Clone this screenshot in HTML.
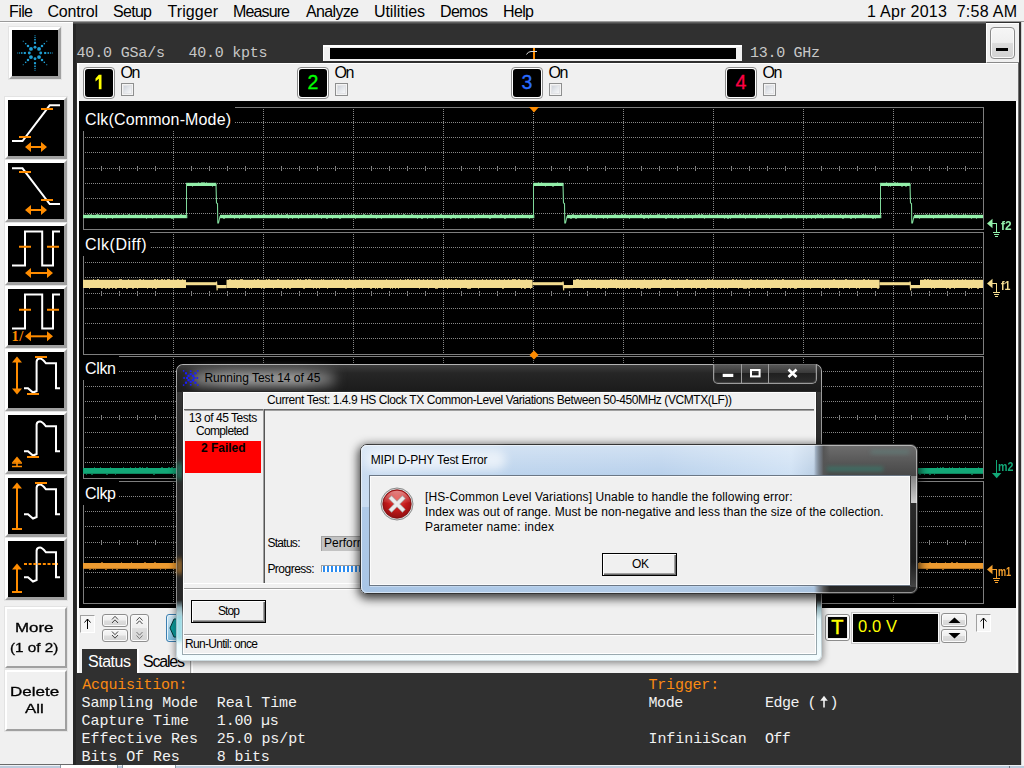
<!DOCTYPE html>
<html><head><meta charset="utf-8"><title>scope</title>
<style>
html,body{margin:0;padding:0;}
body{width:1024px;height:768px;overflow:hidden;position:relative;background:#f0f0f0;font-family:"Liberation Sans",sans-serif;}
.b{position:absolute;box-sizing:border-box;}
.t{position:absolute;white-space:pre;line-height:1;}
svg{position:absolute;overflow:visible;}
</style></head><body>
<div class="b " style="left:0px;top:21px;width:1024px;height:1px;background:#9a9a9a;"></div>
<div class="b " style="left:0px;top:22px;width:73px;height:1px;background:#ffffff;"></div>
<div class="t" id="t1" style="left:9.00px;top:4.00px;font-size:16px;color:#000;font-family:'Liberation Sans', sans-serif;letter-spacing:-0.594px;"><span>File</span></div>
<div class="t" id="t2" style="left:47.50px;top:4.00px;font-size:16px;color:#000;font-family:'Liberation Sans', sans-serif;letter-spacing:-0.180px;"><span>Control</span></div>
<div class="t" id="t3" style="left:113.00px;top:4.00px;font-size:16px;color:#000;font-family:'Liberation Sans', sans-serif;letter-spacing:-0.703px;"><span>Setup</span></div>
<div class="t" id="t4" style="left:167.50px;top:4.00px;font-size:16px;color:#000;font-family:'Liberation Sans', sans-serif;letter-spacing:0.068px;"><span>Trigger</span></div>
<div class="t" id="t5" style="left:233.00px;top:4.00px;font-size:16px;color:#000;font-family:'Liberation Sans', sans-serif;letter-spacing:-0.875px;"><span>Measure</span></div>
<div class="t" id="t6" style="left:306.00px;top:4.00px;font-size:16px;color:#000;font-family:'Liberation Sans', sans-serif;letter-spacing:-0.654px;"><span>Analyze</span></div>
<div class="t" id="t7" style="left:374.00px;top:4.00px;font-size:16px;color:#000;font-family:'Liberation Sans', sans-serif;letter-spacing:-0.070px;"><span>Utilities</span></div>
<div class="t" id="t8" style="left:440.00px;top:4.00px;font-size:16px;color:#000;font-family:'Liberation Sans', sans-serif;letter-spacing:-0.672px;"><span>Demos</span></div>
<div class="t" id="t9" style="left:503.00px;top:4.00px;font-size:16px;color:#000;font-family:'Liberation Sans', sans-serif;letter-spacing:-0.635px;"><span>Help</span></div>
<div class="t" id="t10" style="left:867.00px;top:4.00px;font-size:16px;color:#000;font-family:'Liberation Sans', sans-serif;letter-spacing:0.278px;"><span>1 Apr 2013  7:58 AM</span></div>
<div class="b " style="left:73px;top:22px;width:948px;height:743px;background:#303030;"></div>
<div class="b " style="left:73px;top:22px;width:3px;height:743px;background:#262626;"></div>
<div class="b " style="left:73px;top:22px;width:913px;height:2px;background:linear-gradient(#6e6e6e,#3a3a3a);"></div>
<div class="b " style="left:1021px;top:22px;width:3px;height:743px;background:#f4f4f4;"></div>
<div class="t" id="t11" style="left:76.50px;top:46.00px;font-size:15px;color:#c8c8c8;font-family:'Liberation Mono', monospace;letter-spacing:-0.168px;"><span>40.0 GSa/s</span></div>
<div class="t" id="t12" style="left:188.50px;top:46.00px;font-size:15px;color:#c8c8c8;font-family:'Liberation Mono', monospace;letter-spacing:-0.252px;"><span>40.0 kpts</span></div>
<div class="t" id="t13" style="left:750.00px;top:46.00px;font-size:15px;color:#c8c8c8;font-family:'Liberation Mono', monospace;letter-spacing:-0.288px;"><span>13.0 GHz</span></div>
<div class="b " style="left:323px;top:45px;width:419px;height:16px;background:#f0f0f0;border-top:2px solid #fff;border-left:1px solid #fff;"></div>
<div class="b " style="left:330px;top:48px;width:406px;height:11px;background:#000;"></div>
<div class="b " style="left:533px;top:48px;width:2px;height:11px;background:#ff8c00;"></div>
<svg style="left:526px;top:50px" width="12" height="6"><path d="M0.5,4.5 Q2,1.5 5,1.5 L11,1.5" stroke="#ddd" stroke-width="1" fill="none"/></svg>
<div class="b " style="left:986px;top:23px;width:33px;height:40px;background:#f0f0f0;border-top:1px solid #fff;border-left:1px solid #fff;border-bottom:1px solid #8a8a8a;"></div>
<div class="b " style="left:990px;top:27px;width:25px;height:32px;border:1px solid #8a8a8a;border-radius:4px;background:linear-gradient(#f6f6f6 0%,#efefef 48%,#dcdcdc 52%,#d2d2d2 100%);box-shadow:inset 0 0 0 1px #fafafa;"></div>
<div class="b " style="left:996px;top:48px;width:12px;height:3px;background:#000;"></div>
<div class="b " style="left:77px;top:63px;width:941px;height:38px;background:#f0f0f0;border-top:1px solid #fff;border-left:2px solid #fff;"></div>
<div class="b " style="left:83px;top:67px;width:32px;height:32px;background:#f0f0f0;border:1px solid #8c8c8c;border-radius:4px;box-shadow:inset 0 0 0 1px #fff;"></div>
<div class="b " style="left:85px;top:69px;width:28px;height:28px;background:#000;border-radius:3px;"></div>
<svg style="left:0;top:0" width="200" height="100"><path d="M98.8,74.8 H101.5 V89.2 H98.8 V78.8 L95.5,81.4 V78.6 Z" fill="#ffff00"/></svg>
<div class="t" id="t14" style="left:120.50px;top:65.00px;font-size:16px;color:#000;font-family:'Liberation Sans', sans-serif;letter-spacing:-1.344px;"><span>On</span></div>
<div class="b " style="left:121px;top:83px;width:13px;height:13px;border:1px solid #8e8f8f;background:#f4f4f4;"></div>
<div class="b " style="left:123px;top:85px;width:9px;height:9px;border:1px solid #e2e3e6;background:linear-gradient(135deg,#cfd3da 0%,#e4e7eb 50%,#f6f7f8 100%);"></div>
<div class="b " style="left:297px;top:67px;width:32px;height:32px;background:#f0f0f0;border:1px solid #8c8c8c;border-radius:4px;box-shadow:inset 0 0 0 1px #fff;"></div>
<div class="b " style="left:299px;top:69px;width:28px;height:28px;background:#000;border-radius:3px;"></div>
<div class="t" id="t15" style="left:113.00px;width:400px;text-align:center;top:73.00px;font-size:19.5px;color:#00ff00;font-family:'Liberation Sans', sans-serif;-webkit-text-stroke:0.3px #00ff00;"><span>2</span></div>
<div class="t" id="t16" style="left:334.50px;top:65.00px;font-size:16px;color:#000;font-family:'Liberation Sans', sans-serif;letter-spacing:-1.344px;"><span>On</span></div>
<div class="b " style="left:335px;top:83px;width:13px;height:13px;border:1px solid #8e8f8f;background:#f4f4f4;"></div>
<div class="b " style="left:337px;top:85px;width:9px;height:9px;border:1px solid #e2e3e6;background:linear-gradient(135deg,#cfd3da 0%,#e4e7eb 50%,#f6f7f8 100%);"></div>
<div class="b " style="left:511px;top:67px;width:32px;height:32px;background:#f0f0f0;border:1px solid #8c8c8c;border-radius:4px;box-shadow:inset 0 0 0 1px #fff;"></div>
<div class="b " style="left:513px;top:69px;width:28px;height:28px;background:#000;border-radius:3px;"></div>
<div class="t" id="t17" style="left:327.00px;width:400px;text-align:center;top:73.00px;font-size:19.5px;color:#2a6cff;font-family:'Liberation Sans', sans-serif;-webkit-text-stroke:0.3px #2a6cff;"><span>3</span></div>
<div class="t" id="t18" style="left:548.50px;top:65.00px;font-size:16px;color:#000;font-family:'Liberation Sans', sans-serif;letter-spacing:-1.344px;"><span>On</span></div>
<div class="b " style="left:549px;top:83px;width:13px;height:13px;border:1px solid #8e8f8f;background:#f4f4f4;"></div>
<div class="b " style="left:551px;top:85px;width:9px;height:9px;border:1px solid #e2e3e6;background:linear-gradient(135deg,#cfd3da 0%,#e4e7eb 50%,#f6f7f8 100%);"></div>
<div class="b " style="left:725px;top:67px;width:32px;height:32px;background:#f0f0f0;border:1px solid #8c8c8c;border-radius:4px;box-shadow:inset 0 0 0 1px #fff;"></div>
<div class="b " style="left:727px;top:69px;width:28px;height:28px;background:#000;border-radius:3px;"></div>
<div class="t" id="t19" style="left:541.00px;width:400px;text-align:center;top:73.00px;font-size:19.5px;color:#ff0044;font-family:'Liberation Sans', sans-serif;-webkit-text-stroke:0.3px #ff0044;"><span>4</span></div>
<div class="t" id="t20" style="left:762.50px;top:65.00px;font-size:16px;color:#000;font-family:'Liberation Sans', sans-serif;letter-spacing:-1.344px;"><span>On</span></div>
<div class="b " style="left:763px;top:83px;width:13px;height:13px;border:1px solid #8e8f8f;background:#f4f4f4;"></div>
<div class="b " style="left:765px;top:85px;width:9px;height:9px;border:1px solid #e2e3e6;background:linear-gradient(135deg,#cfd3da 0%,#e4e7eb 50%,#f6f7f8 100%);"></div>
<div class="b " style="left:79px;top:101px;width:937px;height:507px;background:#000;"></div>
<div class="b " style="left:1016px;top:101px;width:2px;height:572px;background:#fbfbfb;"></div>
<div class="b " style="left:1018px;top:63px;width:1px;height:610px;background:#6e6e6e;"></div>
<div class="b " style="left:1021px;top:22px;width:1px;height:743px;background:#d2d2d2;"></div>
<div class="b " style="left:77px;top:101px;width:2px;height:572px;background:#fdfdfd;"></div>
<div class="b " style="left:79px;top:608px;width:937px;height:65px;background:#f0f0f0;"></div>
<svg style="left:0;top:0" width="1024" height="768" shape-rendering="crispEdges">
<line x1="85" y1="122.5" x2="983" y2="122.5" stroke="#888888" stroke-width="1" stroke-dasharray="1 1"/>
<line x1="85" y1="137.5" x2="983" y2="137.5" stroke="#888888" stroke-width="1" stroke-dasharray="1 1"/>
<line x1="85" y1="152.5" x2="983" y2="152.5" stroke="#888888" stroke-width="1" stroke-dasharray="1 1"/>
<line x1="85" y1="168.5" x2="983" y2="168.5" stroke="#888888" stroke-width="1" stroke-dasharray="1 1"/>
<line x1="85" y1="183.5" x2="983" y2="183.5" stroke="#888888" stroke-width="1" stroke-dasharray="1 1"/>
<line x1="85" y1="198.5" x2="983" y2="198.5" stroke="#888888" stroke-width="1" stroke-dasharray="1 1"/>
<line x1="85" y1="213.5" x2="983" y2="213.5" stroke="#888888" stroke-width="1" stroke-dasharray="1 1"/>
<line x1="173.5" y1="109" x2="173.5" y2="229" stroke="#888888" stroke-width="1" stroke-dasharray="1 1"/>
<line x1="263.5" y1="109" x2="263.5" y2="229" stroke="#888888" stroke-width="1" stroke-dasharray="1 1"/>
<line x1="353.5" y1="109" x2="353.5" y2="229" stroke="#888888" stroke-width="1" stroke-dasharray="1 1"/>
<line x1="443.5" y1="109" x2="443.5" y2="229" stroke="#888888" stroke-width="1" stroke-dasharray="1 1"/>
<line x1="533.5" y1="109" x2="533.5" y2="229" stroke="#888888" stroke-width="1" stroke-dasharray="1 1"/>
<line x1="623.5" y1="109" x2="623.5" y2="229" stroke="#888888" stroke-width="1" stroke-dasharray="1 1"/>
<line x1="713.5" y1="109" x2="713.5" y2="229" stroke="#888888" stroke-width="1" stroke-dasharray="1 1"/>
<line x1="803.5" y1="109" x2="803.5" y2="229" stroke="#888888" stroke-width="1" stroke-dasharray="1 1"/>
<line x1="893.5" y1="109" x2="893.5" y2="229" stroke="#888888" stroke-width="1" stroke-dasharray="1 1"/>
<path d="M101.5,166 v5 M119.5,166 v5 M137.5,166 v5 M155.5,166 v5 M191.5,166 v5 M209.5,166 v5 M227.5,166 v5 M245.5,166 v5 M281.5,166 v5 M299.5,166 v5 M317.5,166 v5 M335.5,166 v5 M371.5,166 v5 M389.5,166 v5 M407.5,166 v5 M425.5,166 v5 M461.5,166 v5 M479.5,166 v5 M497.5,166 v5 M515.5,166 v5 M551.5,166 v5 M569.5,166 v5 M587.5,166 v5 M605.5,166 v5 M641.5,166 v5 M659.5,166 v5 M677.5,166 v5 M695.5,166 v5 M731.5,166 v5 M749.5,166 v5 M767.5,166 v5 M785.5,166 v5 M821.5,166 v5 M839.5,166 v5 M857.5,166 v5 M875.5,166 v5 M911.5,166 v5 M929.5,166 v5 M947.5,166 v5 M965.5,166 v5" stroke="#828282" stroke-width="1" fill="none"/>
<rect x="83" y="107" width="152" height="24" fill="#000"/>
<path d="M235,107.5 H983.5 V229.5 H83.5 V131" stroke="#7e7e7e" stroke-width="1" fill="none"/>
<line x1="85" y1="247.5" x2="983" y2="247.5" stroke="#888888" stroke-width="1" stroke-dasharray="1 1"/>
<line x1="85" y1="262.5" x2="983" y2="262.5" stroke="#888888" stroke-width="1" stroke-dasharray="1 1"/>
<line x1="85" y1="277.5" x2="983" y2="277.5" stroke="#888888" stroke-width="1" stroke-dasharray="1 1"/>
<line x1="85" y1="293.5" x2="983" y2="293.5" stroke="#888888" stroke-width="1" stroke-dasharray="1 1"/>
<line x1="85" y1="308.5" x2="983" y2="308.5" stroke="#888888" stroke-width="1" stroke-dasharray="1 1"/>
<line x1="85" y1="323.5" x2="983" y2="323.5" stroke="#888888" stroke-width="1" stroke-dasharray="1 1"/>
<line x1="85" y1="338.5" x2="983" y2="338.5" stroke="#888888" stroke-width="1" stroke-dasharray="1 1"/>
<line x1="173.5" y1="234" x2="173.5" y2="354" stroke="#888888" stroke-width="1" stroke-dasharray="1 1"/>
<line x1="263.5" y1="234" x2="263.5" y2="354" stroke="#888888" stroke-width="1" stroke-dasharray="1 1"/>
<line x1="353.5" y1="234" x2="353.5" y2="354" stroke="#888888" stroke-width="1" stroke-dasharray="1 1"/>
<line x1="443.5" y1="234" x2="443.5" y2="354" stroke="#888888" stroke-width="1" stroke-dasharray="1 1"/>
<line x1="533.5" y1="234" x2="533.5" y2="354" stroke="#888888" stroke-width="1" stroke-dasharray="1 1"/>
<line x1="623.5" y1="234" x2="623.5" y2="354" stroke="#888888" stroke-width="1" stroke-dasharray="1 1"/>
<line x1="713.5" y1="234" x2="713.5" y2="354" stroke="#888888" stroke-width="1" stroke-dasharray="1 1"/>
<line x1="803.5" y1="234" x2="803.5" y2="354" stroke="#888888" stroke-width="1" stroke-dasharray="1 1"/>
<line x1="893.5" y1="234" x2="893.5" y2="354" stroke="#888888" stroke-width="1" stroke-dasharray="1 1"/>
<path d="M101.5,291 v5 M119.5,291 v5 M137.5,291 v5 M155.5,291 v5 M191.5,291 v5 M209.5,291 v5 M227.5,291 v5 M245.5,291 v5 M281.5,291 v5 M299.5,291 v5 M317.5,291 v5 M335.5,291 v5 M371.5,291 v5 M389.5,291 v5 M407.5,291 v5 M425.5,291 v5 M461.5,291 v5 M479.5,291 v5 M497.5,291 v5 M515.5,291 v5 M551.5,291 v5 M569.5,291 v5 M587.5,291 v5 M605.5,291 v5 M641.5,291 v5 M659.5,291 v5 M677.5,291 v5 M695.5,291 v5 M731.5,291 v5 M749.5,291 v5 M767.5,291 v5 M785.5,291 v5 M821.5,291 v5 M839.5,291 v5 M857.5,291 v5 M875.5,291 v5 M911.5,291 v5 M929.5,291 v5 M947.5,291 v5 M965.5,291 v5" stroke="#828282" stroke-width="1" fill="none"/>
<rect x="83" y="232" width="67" height="24" fill="#000"/>
<path d="M150,232.5 H983.5 V354.5 H83.5 V256" stroke="#7e7e7e" stroke-width="1" fill="none"/>
<line x1="85" y1="371.5" x2="983" y2="371.5" stroke="#888888" stroke-width="1" stroke-dasharray="1 1"/>
<line x1="85" y1="386.5" x2="983" y2="386.5" stroke="#888888" stroke-width="1" stroke-dasharray="1 1"/>
<line x1="85" y1="401.5" x2="983" y2="401.5" stroke="#888888" stroke-width="1" stroke-dasharray="1 1"/>
<line x1="85" y1="417.5" x2="983" y2="417.5" stroke="#888888" stroke-width="1" stroke-dasharray="1 1"/>
<line x1="85" y1="432.5" x2="983" y2="432.5" stroke="#888888" stroke-width="1" stroke-dasharray="1 1"/>
<line x1="85" y1="447.5" x2="983" y2="447.5" stroke="#888888" stroke-width="1" stroke-dasharray="1 1"/>
<line x1="85" y1="462.5" x2="983" y2="462.5" stroke="#888888" stroke-width="1" stroke-dasharray="1 1"/>
<line x1="173.5" y1="358" x2="173.5" y2="478" stroke="#888888" stroke-width="1" stroke-dasharray="1 1"/>
<line x1="263.5" y1="358" x2="263.5" y2="478" stroke="#888888" stroke-width="1" stroke-dasharray="1 1"/>
<line x1="353.5" y1="358" x2="353.5" y2="478" stroke="#888888" stroke-width="1" stroke-dasharray="1 1"/>
<line x1="443.5" y1="358" x2="443.5" y2="478" stroke="#888888" stroke-width="1" stroke-dasharray="1 1"/>
<line x1="533.5" y1="358" x2="533.5" y2="478" stroke="#888888" stroke-width="1" stroke-dasharray="1 1"/>
<line x1="623.5" y1="358" x2="623.5" y2="478" stroke="#888888" stroke-width="1" stroke-dasharray="1 1"/>
<line x1="713.5" y1="358" x2="713.5" y2="478" stroke="#888888" stroke-width="1" stroke-dasharray="1 1"/>
<line x1="803.5" y1="358" x2="803.5" y2="478" stroke="#888888" stroke-width="1" stroke-dasharray="1 1"/>
<line x1="893.5" y1="358" x2="893.5" y2="478" stroke="#888888" stroke-width="1" stroke-dasharray="1 1"/>
<path d="M101.5,415 v5 M119.5,415 v5 M137.5,415 v5 M155.5,415 v5 M191.5,415 v5 M209.5,415 v5 M227.5,415 v5 M245.5,415 v5 M281.5,415 v5 M299.5,415 v5 M317.5,415 v5 M335.5,415 v5 M371.5,415 v5 M389.5,415 v5 M407.5,415 v5 M425.5,415 v5 M461.5,415 v5 M479.5,415 v5 M497.5,415 v5 M515.5,415 v5 M551.5,415 v5 M569.5,415 v5 M587.5,415 v5 M605.5,415 v5 M641.5,415 v5 M659.5,415 v5 M677.5,415 v5 M695.5,415 v5 M731.5,415 v5 M749.5,415 v5 M767.5,415 v5 M785.5,415 v5 M821.5,415 v5 M839.5,415 v5 M857.5,415 v5 M875.5,415 v5 M911.5,415 v5 M929.5,415 v5 M947.5,415 v5 M965.5,415 v5" stroke="#828282" stroke-width="1" fill="none"/>
<rect x="83" y="356" width="36" height="24" fill="#000"/>
<path d="M119,356.5 H983.5 V478.5 H83.5 V380" stroke="#7e7e7e" stroke-width="1" fill="none"/>
<line x1="85" y1="496.5" x2="983" y2="496.5" stroke="#888888" stroke-width="1" stroke-dasharray="1 1"/>
<line x1="85" y1="511.5" x2="983" y2="511.5" stroke="#888888" stroke-width="1" stroke-dasharray="1 1"/>
<line x1="85" y1="526.5" x2="983" y2="526.5" stroke="#888888" stroke-width="1" stroke-dasharray="1 1"/>
<line x1="85" y1="542.5" x2="983" y2="542.5" stroke="#888888" stroke-width="1" stroke-dasharray="1 1"/>
<line x1="85" y1="557.5" x2="983" y2="557.5" stroke="#888888" stroke-width="1" stroke-dasharray="1 1"/>
<line x1="85" y1="572.5" x2="983" y2="572.5" stroke="#888888" stroke-width="1" stroke-dasharray="1 1"/>
<line x1="85" y1="587.5" x2="983" y2="587.5" stroke="#888888" stroke-width="1" stroke-dasharray="1 1"/>
<line x1="173.5" y1="483" x2="173.5" y2="603" stroke="#888888" stroke-width="1" stroke-dasharray="1 1"/>
<line x1="263.5" y1="483" x2="263.5" y2="603" stroke="#888888" stroke-width="1" stroke-dasharray="1 1"/>
<line x1="353.5" y1="483" x2="353.5" y2="603" stroke="#888888" stroke-width="1" stroke-dasharray="1 1"/>
<line x1="443.5" y1="483" x2="443.5" y2="603" stroke="#888888" stroke-width="1" stroke-dasharray="1 1"/>
<line x1="533.5" y1="483" x2="533.5" y2="603" stroke="#888888" stroke-width="1" stroke-dasharray="1 1"/>
<line x1="623.5" y1="483" x2="623.5" y2="603" stroke="#888888" stroke-width="1" stroke-dasharray="1 1"/>
<line x1="713.5" y1="483" x2="713.5" y2="603" stroke="#888888" stroke-width="1" stroke-dasharray="1 1"/>
<line x1="803.5" y1="483" x2="803.5" y2="603" stroke="#888888" stroke-width="1" stroke-dasharray="1 1"/>
<line x1="893.5" y1="483" x2="893.5" y2="603" stroke="#888888" stroke-width="1" stroke-dasharray="1 1"/>
<path d="M101.5,540 v5 M119.5,540 v5 M137.5,540 v5 M155.5,540 v5 M191.5,540 v5 M209.5,540 v5 M227.5,540 v5 M245.5,540 v5 M281.5,540 v5 M299.5,540 v5 M317.5,540 v5 M335.5,540 v5 M371.5,540 v5 M389.5,540 v5 M407.5,540 v5 M425.5,540 v5 M461.5,540 v5 M479.5,540 v5 M497.5,540 v5 M515.5,540 v5 M551.5,540 v5 M569.5,540 v5 M587.5,540 v5 M605.5,540 v5 M641.5,540 v5 M659.5,540 v5 M677.5,540 v5 M695.5,540 v5 M731.5,540 v5 M749.5,540 v5 M767.5,540 v5 M785.5,540 v5 M821.5,540 v5 M839.5,540 v5 M857.5,540 v5 M875.5,540 v5 M911.5,540 v5 M929.5,540 v5 M947.5,540 v5 M965.5,540 v5" stroke="#828282" stroke-width="1" fill="none"/>
<rect x="83" y="481" width="36" height="24" fill="#000"/>
<path d="M119,481.5 H983.5 V603.5 H83.5 V505" stroke="#7e7e7e" stroke-width="1" fill="none"/>
</svg>
<div class="t" id="t21" style="left:85.00px;top:112.00px;font-size:16px;color:#fff;font-family:'Liberation Sans', sans-serif;letter-spacing:0.131px;"><span>Clk(Common-Mode)</span></div>
<div class="t" id="t22" style="left:85.00px;top:237.00px;font-size:16px;color:#fff;font-family:'Liberation Sans', sans-serif;letter-spacing:0.502px;"><span>Clk(Diff)</span></div>
<div class="t" id="t23" style="left:85.00px;top:361.00px;font-size:16px;color:#fff;font-family:'Liberation Sans', sans-serif;letter-spacing:-0.339px;"><span>Clkn</span></div>
<div class="t" id="t24" style="left:85.00px;top:486.00px;font-size:16px;color:#fff;font-family:'Liberation Sans', sans-serif;letter-spacing:-0.339px;"><span>Clkp</span></div>
<svg style="left:0;top:0" width="1024" height="768">
<rect x="83.0" y="214.8" width="104.3" height="3.4" fill="#93efaa"/>
<rect x="220.0" y="214.8" width="314.3" height="3.4" fill="#93efaa"/>
<rect x="567.0" y="214.8" width="314.3" height="3.4" fill="#93efaa"/>
<rect x="914.0" y="214.8" width="69.0" height="3.4" fill="#93efaa"/>
<rect x="186.0" y="182.8" width="30.3" height="3.2" fill="#93efaa"/>
<path d="M186.5,218 V183" stroke="#7fd99a" stroke-width="1" fill="none"/>
<path d="M216.0,184 L216.5,203 L217.5,203.5 L217.8,223 L218.5,223 L220.1,216" stroke="#7fd99a" stroke-width="1.1" fill="none"/>
<rect x="533.0" y="182.8" width="30.3" height="3.2" fill="#93efaa"/>
<path d="M533.5,218 V183" stroke="#7fd99a" stroke-width="1" fill="none"/>
<path d="M563.0,184 L563.5,203 L564.5,203.5 L564.8,223 L565.5,223 L567.1,216" stroke="#7fd99a" stroke-width="1.1" fill="none"/>
<rect x="880.0" y="182.8" width="30.3" height="3.2" fill="#93efaa"/>
<path d="M880.5,218 V183" stroke="#7fd99a" stroke-width="1" fill="none"/>
<path d="M910.0,184 L910.5,203 L911.5,203.5 L911.8,223 L912.5,223 L914.1,216" stroke="#7fd99a" stroke-width="1.1" fill="none"/>
<rect x="83.0" y="279.8" width="103.0" height="8.2" fill="#f3dc90"/>
<rect x="186.0" y="282.2" width="31" height="3" fill="#f3dc90"/>
<path d="M216.5,281.5 L217.2,290.4" stroke="#f3dc90" stroke-width="1.2"/>
<rect x="217.0" y="285" width="9.5" height="3.2" fill="#f3dc90"/>
<rect x="226.5" y="279.8" width="306.0" height="8.2" fill="#f3dc90"/>
<rect x="532.5" y="282.2" width="31" height="3" fill="#f3dc90"/>
<path d="M563.0,281.5 L563.7,290.4" stroke="#f3dc90" stroke-width="1.2"/>
<rect x="563.5" y="285" width="9.5" height="3.2" fill="#f3dc90"/>
<rect x="573.0" y="279.8" width="306.5" height="8.2" fill="#f3dc90"/>
<rect x="879.5" y="282.2" width="31" height="3" fill="#f3dc90"/>
<path d="M910.0,281.5 L910.7,290.4" stroke="#f3dc90" stroke-width="1.2"/>
<rect x="910.5" y="285" width="9.5" height="3.2" fill="#f3dc90"/>
<rect x="920.0" y="279.8" width="63.0" height="8.2" fill="#f3dc90"/>
<rect x="83" y="468" width="900" height="5.8" fill="#12a877"/>
<rect x="83" y="563" width="900" height="5.8" fill="#ec9a30"/>
<path d="M88,213.8 h1 v1 h-1z M90,213.8 h2 v1 h-2z M96,213.8 h2 v1 h-2z M98,213.8 h1 v1 h-1z M101,213.8 h1 v1 h-1z M106,218.2 h1 v1 h-1z M112,218.2 h1 v1 h-1z M116,213.8 h1 v1 h-1z M123,213.8 h1 v1 h-1z M128,213.8 h2 v1 h-2z M135,213.8 h1 v1 h-1z M141,213.8 h1 v1 h-1z M146,218.2 h1 v1 h-1z M152,218.2 h1 v1 h-1z M156,213.8 h1 v1 h-1z M164,213.8 h1 v1 h-1z M171,218.2 h2 v1 h-2z M173,218.2 h1 v1 h-1z M180,213.8 h2 v1 h-2z M223,218.2 h2 v1 h-2z M230,213.8 h1 v1 h-1z M234,218.2 h1 v1 h-1z M239,218.2 h1 v1 h-1z M244,213.8 h2 v1 h-2z M250,218.2 h1 v1 h-1z M258,213.8 h1 v1 h-1z M263,213.8 h2 v1 h-2z M270,213.8 h1 v1 h-1z M273,213.8 h1 v1 h-1z M277,213.8 h2 v1 h-2z M281,213.8 h1 v1 h-1z M286,213.8 h2 v1 h-2z M288,218.2 h1 v1 h-1z M292,218.2 h1 v1 h-1z M298,218.2 h1 v1 h-1z M301,213.8 h1 v1 h-1z M307,213.8 h1 v1 h-1z M313,213.8 h1 v1 h-1z M316,213.8 h2 v1 h-2z M321,218.2 h1 v1 h-1z M326,218.2 h2 v1 h-2z M332,218.2 h1 v1 h-1z M339,218.2 h2 v1 h-2z M343,213.8 h1 v1 h-1z M348,213.8 h1 v1 h-1z M351,213.8 h1 v1 h-1z M353,213.8 h2 v1 h-2z M355,218.2 h1 v1 h-1z M363,213.8 h2 v1 h-2z M370,213.8 h2 v1 h-2z M376,218.2 h1 v1 h-1z M381,218.2 h1 v1 h-1z M389,213.8 h1 v1 h-1z M393,213.8 h1 v1 h-1z M397,213.8 h1 v1 h-1z M403,213.8 h2 v1 h-2z M411,213.8 h2 v1 h-2z M417,218.2 h1 v1 h-1z M421,218.2 h2 v1 h-2z M427,218.2 h1 v1 h-1z M434,218.2 h1 v1 h-1z M440,213.8 h2 v1 h-2z M443,218.2 h1 v1 h-1z M450,218.2 h2 v1 h-2z M453,213.8 h1 v1 h-1z M455,218.2 h1 v1 h-1z M460,218.2 h1 v1 h-1z M468,218.2 h1 v1 h-1z M474,218.2 h1 v1 h-1z M478,213.8 h1 v1 h-1z M483,213.8 h1 v1 h-1z M489,218.2 h2 v1 h-2z M494,213.8 h2 v1 h-2z M500,213.8 h2 v1 h-2z M504,218.2 h2 v1 h-2z M509,213.8 h1 v1 h-1z M515,218.2 h1 v1 h-1z M522,213.8 h1 v1 h-1z M529,218.2 h1 v1 h-1z M570,218.2 h2 v1 h-2z M572,213.8 h2 v1 h-2z M575,218.2 h2 v1 h-2z M580,213.8 h1 v1 h-1z M587,213.8 h1 v1 h-1z M590,213.8 h2 v1 h-2z M596,218.2 h1 v1 h-1z M603,218.2 h1 v1 h-1z M607,218.2 h1 v1 h-1z M614,213.8 h2 v1 h-2z M621,213.8 h2 v1 h-2z M624,213.8 h2 v1 h-2z M629,218.2 h1 v1 h-1z M635,213.8 h1 v1 h-1z M640,213.8 h2 v1 h-2z M643,218.2 h2 v1 h-2z M648,218.2 h1 v1 h-1z M650,213.8 h1 v1 h-1z M657,213.8 h2 v1 h-2z M659,213.8 h1 v1 h-1z M665,218.2 h2 v1 h-2z M668,213.8 h1 v1 h-1z M673,218.2 h1 v1 h-1z M677,218.2 h2 v1 h-2z M684,218.2 h1 v1 h-1z M692,218.2 h1 v1 h-1z M695,213.8 h1 v1 h-1z M698,213.8 h2 v1 h-2z M701,213.8 h2 v1 h-2z M704,218.2 h1 v1 h-1z M709,213.8 h1 v1 h-1z M717,213.8 h1 v1 h-1z M724,218.2 h1 v1 h-1z M727,218.2 h2 v1 h-2z M730,218.2 h1 v1 h-1z M735,213.8 h1 v1 h-1z M739,213.8 h2 v1 h-2z M743,213.8 h1 v1 h-1z M745,218.2 h1 v1 h-1z M749,213.8 h1 v1 h-1z M756,218.2 h1 v1 h-1z M759,213.8 h1 v1 h-1z M766,213.8 h1 v1 h-1z M769,218.2 h1 v1 h-1z M775,213.8 h1 v1 h-1z M780,218.2 h2 v1 h-2z M787,213.8 h1 v1 h-1z M793,213.8 h1 v1 h-1z M796,218.2 h1 v1 h-1z M803,218.2 h1 v1 h-1z M806,218.2 h1 v1 h-1z M811,218.2 h1 v1 h-1z M815,218.2 h1 v1 h-1z M817,213.8 h2 v1 h-2z M820,213.8 h1 v1 h-1z M823,218.2 h1 v1 h-1z M828,213.8 h1 v1 h-1z M833,213.8 h1 v1 h-1z M840,213.8 h1 v1 h-1z M842,218.2 h2 v1 h-2z M845,213.8 h1 v1 h-1z M850,218.2 h2 v1 h-2z M855,218.2 h1 v1 h-1z M862,213.8 h2 v1 h-2z M865,213.8 h1 v1 h-1z M872,218.2 h2 v1 h-2z M875,218.2 h1 v1 h-1z M919,218.2 h1 v1 h-1z M926,213.8 h1 v1 h-1z M929,213.8 h1 v1 h-1z M933,218.2 h1 v1 h-1z M938,213.8 h1 v1 h-1z M945,213.8 h1 v1 h-1z M947,213.8 h1 v1 h-1z M951,213.8 h2 v1 h-2z M956,213.8 h1 v1 h-1z M963,213.8 h1 v1 h-1z M965,213.8 h1 v1 h-1z M971,218.2 h1 v1 h-1z M976,218.2 h1 v1 h-1z" fill="#93efaa" opacity="0.60" shape-rendering="crispEdges"/>
<path d="M89,288.0 h1 v1 h-1z M93,278.8 h1 v1 h-1z M97,278.8 h2 v1 h-2z M101,288.0 h2 v1 h-2z M105,288.0 h2 v1 h-2z M108,288.0 h2 v1 h-2z M112,288.0 h1 v1 h-1z M115,288.0 h2 v1 h-2z M119,278.8 h1 v1 h-1z M120,278.8 h2 v1 h-2z M122,288.0 h1 v1 h-1z M126,288.0 h2 v1 h-2z M128,278.8 h1 v1 h-1z M132,288.0 h2 v1 h-2z M137,288.0 h1 v1 h-1z M139,278.8 h2 v1 h-2z M143,278.8 h1 v1 h-1z M147,288.0 h1 v1 h-1z M152,288.0 h1 v1 h-1z M154,278.8 h2 v1 h-2z M155,288.0 h2 v1 h-2z M157,278.8 h1 v1 h-1z M161,278.8 h2 v1 h-2z M164,278.8 h1 v1 h-1z M167,278.8 h2 v1 h-2z M169,278.8 h1 v1 h-1z M173,278.8 h1 v1 h-1z M177,278.8 h2 v1 h-2z M182,278.8 h1 v1 h-1z M229,278.8 h2 v1 h-2z M230,278.8 h1 v1 h-1z M235,278.8 h1 v1 h-1z M237,288.0 h1 v1 h-1z M240,278.8 h2 v1 h-2z M242,278.8 h1 v1 h-1z M245,288.0 h1 v1 h-1z M249,288.0 h1 v1 h-1z M251,288.0 h1 v1 h-1z M254,278.8 h1 v1 h-1z M257,278.8 h2 v1 h-2z M261,288.0 h1 v1 h-1z M264,288.0 h1 v1 h-1z M266,278.8 h1 v1 h-1z M268,278.8 h2 v1 h-2z M273,288.0 h1 v1 h-1z M277,278.8 h2 v1 h-2z M282,288.0 h2 v1 h-2z M286,288.0 h1 v1 h-1z M289,288.0 h2 v1 h-2z M292,278.8 h1 v1 h-1z M297,278.8 h2 v1 h-2z M300,278.8 h1 v1 h-1z M303,288.0 h2 v1 h-2z M305,278.8 h2 v1 h-2z M308,278.8 h2 v1 h-2z M310,278.8 h1 v1 h-1z M313,288.0 h1 v1 h-1z M316,288.0 h1 v1 h-1z M319,288.0 h1 v1 h-1z M321,278.8 h1 v1 h-1z M323,278.8 h1 v1 h-1z M327,288.0 h1 v1 h-1z M332,278.8 h1 v1 h-1z M336,278.8 h1 v1 h-1z M338,278.8 h1 v1 h-1z M342,278.8 h1 v1 h-1z M345,288.0 h2 v1 h-2z M349,278.8 h1 v1 h-1z M352,288.0 h1 v1 h-1z M355,288.0 h1 v1 h-1z M359,278.8 h1 v1 h-1z M362,288.0 h1 v1 h-1z M365,278.8 h1 v1 h-1z M370,288.0 h2 v1 h-2z M375,288.0 h1 v1 h-1z M377,288.0 h1 v1 h-1z M381,288.0 h2 v1 h-2z M386,278.8 h1 v1 h-1z M390,288.0 h1 v1 h-1z M392,288.0 h1 v1 h-1z M395,288.0 h1 v1 h-1z M398,288.0 h1 v1 h-1z M400,278.8 h1 v1 h-1z M405,278.8 h1 v1 h-1z M407,278.8 h2 v1 h-2z M410,278.8 h1 v1 h-1z M413,278.8 h1 v1 h-1z M415,278.8 h1 v1 h-1z M418,278.8 h2 v1 h-2z M419,288.0 h1 v1 h-1z M423,278.8 h1 v1 h-1z M427,278.8 h1 v1 h-1z M428,288.0 h1 v1 h-1z M431,278.8 h1 v1 h-1z M435,288.0 h2 v1 h-2z M437,288.0 h1 v1 h-1z M439,278.8 h1 v1 h-1z M441,278.8 h1 v1 h-1z M445,278.8 h2 v1 h-2z M447,288.0 h1 v1 h-1z M448,278.8 h2 v1 h-2z M451,278.8 h1 v1 h-1z M455,278.8 h1 v1 h-1z M456,278.8 h1 v1 h-1z M460,288.0 h1 v1 h-1z M465,278.8 h1 v1 h-1z M467,288.0 h2 v1 h-2z M469,288.0 h2 v1 h-2z M473,278.8 h1 v1 h-1z M475,278.8 h1 v1 h-1z M478,288.0 h1 v1 h-1z M482,278.8 h1 v1 h-1z M486,278.8 h1 v1 h-1z M490,278.8 h1 v1 h-1z M495,278.8 h1 v1 h-1z M499,278.8 h1 v1 h-1z M502,288.0 h2 v1 h-2z M504,278.8 h1 v1 h-1z M508,278.8 h1 v1 h-1z M512,278.8 h2 v1 h-2z M514,278.8 h2 v1 h-2z M518,278.8 h2 v1 h-2z M521,288.0 h1 v1 h-1z M524,288.0 h2 v1 h-2z M526,278.8 h1 v1 h-1z M530,288.0 h1 v1 h-1z M576,278.8 h2 v1 h-2z M578,278.8 h1 v1 h-1z M580,278.8 h1 v1 h-1z M583,288.0 h1 v1 h-1z M588,278.8 h1 v1 h-1z M590,278.8 h1 v1 h-1z M595,278.8 h1 v1 h-1z M596,288.0 h1 v1 h-1z M600,288.0 h2 v1 h-2z M605,288.0 h1 v1 h-1z M607,288.0 h1 v1 h-1z M610,278.8 h2 v1 h-2z M613,278.8 h1 v1 h-1z M615,278.8 h2 v1 h-2z M616,288.0 h1 v1 h-1z M619,288.0 h1 v1 h-1z M621,288.0 h1 v1 h-1z M623,288.0 h1 v1 h-1z M625,288.0 h1 v1 h-1z M626,278.8 h1 v1 h-1z M628,288.0 h2 v1 h-2z M631,278.8 h1 v1 h-1z M636,288.0 h1 v1 h-1z M640,288.0 h2 v1 h-2z M642,288.0 h2 v1 h-2z M644,278.8 h1 v1 h-1z M646,288.0 h1 v1 h-1z M648,288.0 h2 v1 h-2z M650,288.0 h1 v1 h-1z M653,278.8 h1 v1 h-1z M655,278.8 h1 v1 h-1z M658,278.8 h1 v1 h-1z M660,288.0 h1 v1 h-1z M662,278.8 h2 v1 h-2z M664,278.8 h2 v1 h-2z M669,278.8 h2 v1 h-2z M674,288.0 h1 v1 h-1z M678,278.8 h1 v1 h-1z M683,288.0 h1 v1 h-1z M686,278.8 h1 v1 h-1z M687,278.8 h1 v1 h-1z M691,288.0 h1 v1 h-1z M694,278.8 h1 v1 h-1z M696,288.0 h1 v1 h-1z M700,288.0 h1 v1 h-1z M705,288.0 h2 v1 h-2z M707,278.8 h1 v1 h-1z M709,278.8 h1 v1 h-1z M712,278.8 h1 v1 h-1z M717,288.0 h1 v1 h-1z M720,288.0 h1 v1 h-1z M724,288.0 h1 v1 h-1z M727,288.0 h1 v1 h-1z M732,278.8 h2 v1 h-2z M736,278.8 h1 v1 h-1z M738,288.0 h1 v1 h-1z M740,278.8 h1 v1 h-1z M743,288.0 h2 v1 h-2z M745,288.0 h2 v1 h-2z M748,288.0 h2 v1 h-2z M750,278.8 h2 v1 h-2z M755,288.0 h1 v1 h-1z M757,278.8 h1 v1 h-1z M761,288.0 h1 v1 h-1z M763,288.0 h1 v1 h-1z M766,278.8 h1 v1 h-1z M770,288.0 h1 v1 h-1z M774,278.8 h1 v1 h-1z M776,278.8 h1 v1 h-1z M780,288.0 h2 v1 h-2z M782,278.8 h2 v1 h-2z M787,288.0 h1 v1 h-1z M790,288.0 h1 v1 h-1z M794,288.0 h2 v1 h-2z M796,288.0 h1 v1 h-1z M800,278.8 h1 v1 h-1z M805,278.8 h1 v1 h-1z M810,288.0 h1 v1 h-1z M814,278.8 h1 v1 h-1z M817,278.8 h1 v1 h-1z M821,288.0 h1 v1 h-1z M824,288.0 h1 v1 h-1z M829,288.0 h1 v1 h-1z M833,278.8 h1 v1 h-1z M834,278.8 h1 v1 h-1z M838,288.0 h1 v1 h-1z M843,288.0 h1 v1 h-1z M845,278.8 h2 v1 h-2z M849,288.0 h1 v1 h-1z M853,278.8 h1 v1 h-1z M856,288.0 h1 v1 h-1z M859,288.0 h1 v1 h-1z M863,278.8 h1 v1 h-1z M864,278.8 h1 v1 h-1z M868,278.8 h1 v1 h-1z M871,288.0 h1 v1 h-1z M877,288.0 h2 v1 h-2z M924,278.8 h2 v1 h-2z M927,278.8 h2 v1 h-2z M930,278.8 h1 v1 h-1z M931,288.0 h1 v1 h-1z M934,288.0 h1 v1 h-1z M939,278.8 h1 v1 h-1z M941,278.8 h1 v1 h-1z M946,288.0 h1 v1 h-1z M949,288.0 h2 v1 h-2z M953,278.8 h1 v1 h-1z M954,288.0 h1 v1 h-1z M957,278.8 h1 v1 h-1z M962,278.8 h1 v1 h-1z M965,278.8 h1 v1 h-1z M968,288.0 h2 v1 h-2z M971,288.0 h1 v1 h-1z M973,278.8 h1 v1 h-1z M977,288.0 h2 v1 h-2z" fill="#f3dc90" opacity="0.70" shape-rendering="crispEdges"/>
<path d="M86,473.8 h1 v1 h-1z M91,473.8 h2 v1 h-2z M94,467.0 h1 v1 h-1z M100,467.0 h1 v1 h-1z M106,473.8 h2 v1 h-2z M110,467.0 h1 v1 h-1z M115,473.8 h1 v1 h-1z M123,467.0 h1 v1 h-1z M130,467.0 h1 v1 h-1z M135,467.0 h1 v1 h-1z M139,467.0 h2 v1 h-2z M142,467.0 h1 v1 h-1z M146,467.0 h2 v1 h-2z M153,473.8 h2 v1 h-2z M161,467.0 h2 v1 h-2z M168,467.0 h2 v1 h-2z M171,467.0 h2 v1 h-2z M178,467.0 h1 v1 h-1z M183,473.8 h2 v1 h-2z M186,467.0 h1 v1 h-1z M192,467.0 h1 v1 h-1z M195,467.0 h1 v1 h-1z M198,473.8 h2 v1 h-2z M204,467.0 h2 v1 h-2z M211,467.0 h1 v1 h-1z M219,473.8 h2 v1 h-2z M221,473.8 h2 v1 h-2z M224,467.0 h1 v1 h-1z M226,467.0 h2 v1 h-2z M232,467.0 h2 v1 h-2z M235,473.8 h1 v1 h-1z M241,467.0 h1 v1 h-1z M245,467.0 h1 v1 h-1z M253,473.8 h1 v1 h-1z M257,473.8 h1 v1 h-1z M263,473.8 h1 v1 h-1z M269,473.8 h1 v1 h-1z M271,473.8 h2 v1 h-2z M275,467.0 h2 v1 h-2z M280,473.8 h2 v1 h-2z M283,467.0 h1 v1 h-1z M285,467.0 h1 v1 h-1z M291,467.0 h1 v1 h-1z M296,473.8 h1 v1 h-1z M303,473.8 h1 v1 h-1z M311,467.0 h2 v1 h-2z M319,473.8 h1 v1 h-1z M326,467.0 h1 v1 h-1z M329,473.8 h2 v1 h-2z M334,473.8 h2 v1 h-2z M336,467.0 h1 v1 h-1z M341,473.8 h1 v1 h-1z M347,473.8 h1 v1 h-1z M349,467.0 h1 v1 h-1z M354,473.8 h2 v1 h-2z M358,467.0 h2 v1 h-2z M363,473.8 h2 v1 h-2z M369,473.8 h2 v1 h-2z M373,473.8 h1 v1 h-1z M380,473.8 h1 v1 h-1z M387,467.0 h1 v1 h-1z M393,473.8 h1 v1 h-1z M396,473.8 h1 v1 h-1z M402,467.0 h2 v1 h-2z M406,473.8 h2 v1 h-2z M412,467.0 h2 v1 h-2z M415,473.8 h1 v1 h-1z M419,467.0 h1 v1 h-1z M422,473.8 h2 v1 h-2z M425,467.0 h2 v1 h-2z M430,473.8 h1 v1 h-1z M436,467.0 h1 v1 h-1z M439,467.0 h1 v1 h-1z M446,467.0 h1 v1 h-1z M450,473.8 h1 v1 h-1z M455,467.0 h2 v1 h-2z M457,473.8 h1 v1 h-1z M462,467.0 h2 v1 h-2z M469,473.8 h2 v1 h-2z M475,473.8 h1 v1 h-1z M481,473.8 h2 v1 h-2z M488,473.8 h2 v1 h-2z M491,473.8 h1 v1 h-1z M496,467.0 h1 v1 h-1z M502,467.0 h1 v1 h-1z M507,473.8 h2 v1 h-2z M510,467.0 h1 v1 h-1z M512,473.8 h1 v1 h-1z M518,473.8 h1 v1 h-1z M522,467.0 h1 v1 h-1z M527,467.0 h1 v1 h-1z M533,473.8 h1 v1 h-1z M540,473.8 h1 v1 h-1z M543,467.0 h2 v1 h-2z M546,473.8 h1 v1 h-1z M552,473.8 h1 v1 h-1z M556,467.0 h1 v1 h-1z M563,473.8 h1 v1 h-1z M570,473.8 h2 v1 h-2z M574,467.0 h1 v1 h-1z M579,467.0 h1 v1 h-1z M583,473.8 h1 v1 h-1z M589,467.0 h2 v1 h-2z M592,467.0 h2 v1 h-2z M600,473.8 h1 v1 h-1z M608,467.0 h1 v1 h-1z M611,473.8 h1 v1 h-1z M617,473.8 h1 v1 h-1z M623,467.0 h1 v1 h-1z M629,467.0 h1 v1 h-1z M632,473.8 h2 v1 h-2z M639,467.0 h1 v1 h-1z M646,473.8 h1 v1 h-1z M652,473.8 h1 v1 h-1z M657,473.8 h2 v1 h-2z M661,467.0 h2 v1 h-2z M666,473.8 h1 v1 h-1z M669,467.0 h1 v1 h-1z M673,467.0 h1 v1 h-1z M680,473.8 h1 v1 h-1z M682,473.8 h1 v1 h-1z M684,467.0 h1 v1 h-1z M687,467.0 h1 v1 h-1z M690,473.8 h1 v1 h-1z M693,467.0 h1 v1 h-1z M696,473.8 h1 v1 h-1z M699,473.8 h2 v1 h-2z M705,473.8 h2 v1 h-2z M711,473.8 h2 v1 h-2z M714,467.0 h2 v1 h-2z M716,473.8 h1 v1 h-1z M719,467.0 h1 v1 h-1z M722,467.0 h1 v1 h-1z M728,467.0 h1 v1 h-1z M731,467.0 h1 v1 h-1z M734,473.8 h2 v1 h-2z M736,467.0 h1 v1 h-1z M741,467.0 h2 v1 h-2z M746,467.0 h1 v1 h-1z M753,467.0 h1 v1 h-1z M758,467.0 h2 v1 h-2z M763,473.8 h2 v1 h-2z M771,473.8 h1 v1 h-1z M776,467.0 h1 v1 h-1z M783,467.0 h2 v1 h-2z M785,467.0 h2 v1 h-2z M790,473.8 h2 v1 h-2z M797,467.0 h1 v1 h-1z M802,467.0 h2 v1 h-2z M806,473.8 h1 v1 h-1z M810,473.8 h2 v1 h-2z M817,473.8 h1 v1 h-1z M823,467.0 h1 v1 h-1z M827,467.0 h1 v1 h-1z M835,473.8 h1 v1 h-1z M837,473.8 h2 v1 h-2z M842,467.0 h2 v1 h-2z M845,467.0 h1 v1 h-1z M852,473.8 h1 v1 h-1z M858,473.8 h2 v1 h-2z M864,467.0 h2 v1 h-2z M870,473.8 h2 v1 h-2z M876,467.0 h1 v1 h-1z M882,473.8 h2 v1 h-2z M885,473.8 h1 v1 h-1z M889,473.8 h1 v1 h-1z M895,473.8 h1 v1 h-1z M898,473.8 h1 v1 h-1z M901,467.0 h1 v1 h-1z M904,467.0 h1 v1 h-1z M909,467.0 h1 v1 h-1z M915,473.8 h1 v1 h-1z M919,473.8 h2 v1 h-2z M924,473.8 h1 v1 h-1z M929,473.8 h2 v1 h-2z M934,473.8 h1 v1 h-1z M937,467.0 h1 v1 h-1z M940,467.0 h1 v1 h-1z M942,467.0 h2 v1 h-2z M949,467.0 h1 v1 h-1z M952,467.0 h1 v1 h-1z M959,467.0 h1 v1 h-1z M965,467.0 h1 v1 h-1z M971,473.8 h2 v1 h-2z M978,467.0 h1 v1 h-1z" fill="#12a877" opacity="0.60" shape-rendering="crispEdges"/>
<path d="M89,568.8 h2 v1 h-2z M93,568.8 h1 v1 h-1z M95,568.8 h1 v1 h-1z M101,562.0 h2 v1 h-2z M105,568.8 h2 v1 h-2z M112,568.8 h1 v1 h-1z M116,568.8 h2 v1 h-2z M121,562.0 h1 v1 h-1z M128,568.8 h1 v1 h-1z M131,562.0 h1 v1 h-1z M137,568.8 h1 v1 h-1z M144,562.0 h2 v1 h-2z M148,568.8 h2 v1 h-2z M154,562.0 h2 v1 h-2z M160,568.8 h1 v1 h-1z M165,568.8 h1 v1 h-1z M173,562.0 h1 v1 h-1z M179,568.8 h2 v1 h-2z M183,562.0 h1 v1 h-1z M185,562.0 h1 v1 h-1z M188,562.0 h1 v1 h-1z M190,562.0 h2 v1 h-2z M198,568.8 h2 v1 h-2z M206,568.8 h1 v1 h-1z M211,568.8 h1 v1 h-1z M214,568.8 h2 v1 h-2z M218,562.0 h2 v1 h-2z M222,562.0 h2 v1 h-2z M226,568.8 h1 v1 h-1z M230,568.8 h1 v1 h-1z M234,562.0 h1 v1 h-1z M240,568.8 h1 v1 h-1z M245,568.8 h1 v1 h-1z M248,562.0 h1 v1 h-1z M251,562.0 h2 v1 h-2z M257,562.0 h1 v1 h-1z M262,562.0 h1 v1 h-1z M269,562.0 h1 v1 h-1z M272,562.0 h2 v1 h-2z M275,568.8 h1 v1 h-1z M279,568.8 h2 v1 h-2z M281,568.8 h1 v1 h-1z M288,568.8 h1 v1 h-1z M292,562.0 h1 v1 h-1z M299,568.8 h2 v1 h-2z M307,568.8 h1 v1 h-1z M311,562.0 h1 v1 h-1z M313,568.8 h1 v1 h-1z M321,562.0 h1 v1 h-1z M328,568.8 h1 v1 h-1z M334,568.8 h1 v1 h-1z M336,568.8 h1 v1 h-1z M342,568.8 h2 v1 h-2z M345,562.0 h1 v1 h-1z M348,562.0 h2 v1 h-2z M351,568.8 h1 v1 h-1z M353,568.8 h2 v1 h-2z M360,562.0 h1 v1 h-1z M365,568.8 h2 v1 h-2z M373,562.0 h1 v1 h-1z M377,568.8 h1 v1 h-1z M383,568.8 h1 v1 h-1z M388,562.0 h2 v1 h-2z M392,562.0 h1 v1 h-1z M396,562.0 h1 v1 h-1z M399,568.8 h1 v1 h-1z M407,568.8 h1 v1 h-1z M410,562.0 h1 v1 h-1z M417,568.8 h1 v1 h-1z M424,562.0 h2 v1 h-2z M429,568.8 h1 v1 h-1z M433,568.8 h1 v1 h-1z M438,562.0 h1 v1 h-1z M441,568.8 h1 v1 h-1z M444,568.8 h1 v1 h-1z M447,568.8 h1 v1 h-1z M450,562.0 h1 v1 h-1z M454,562.0 h1 v1 h-1z M460,562.0 h1 v1 h-1z M463,562.0 h1 v1 h-1z M468,562.0 h1 v1 h-1z M475,568.8 h1 v1 h-1z M482,568.8 h1 v1 h-1z M489,562.0 h1 v1 h-1z M492,562.0 h1 v1 h-1z M496,568.8 h1 v1 h-1z M498,562.0 h1 v1 h-1z M501,568.8 h2 v1 h-2z M504,562.0 h2 v1 h-2z M511,568.8 h1 v1 h-1z M516,562.0 h2 v1 h-2z M520,568.8 h1 v1 h-1z M523,562.0 h2 v1 h-2z M530,568.8 h2 v1 h-2z M537,568.8 h1 v1 h-1z M544,568.8 h2 v1 h-2z M550,562.0 h1 v1 h-1z M556,568.8 h2 v1 h-2z M559,562.0 h1 v1 h-1z M561,568.8 h2 v1 h-2z M568,568.8 h1 v1 h-1z M573,568.8 h1 v1 h-1z M580,562.0 h1 v1 h-1z M584,562.0 h1 v1 h-1z M590,562.0 h1 v1 h-1z M597,562.0 h1 v1 h-1z M603,568.8 h2 v1 h-2z M605,568.8 h2 v1 h-2z M613,562.0 h1 v1 h-1z M619,568.8 h1 v1 h-1z M627,568.8 h2 v1 h-2z M629,568.8 h1 v1 h-1z M634,562.0 h2 v1 h-2z M641,562.0 h1 v1 h-1z M649,568.8 h1 v1 h-1z M652,562.0 h1 v1 h-1z M659,562.0 h1 v1 h-1z M666,562.0 h2 v1 h-2z M668,568.8 h2 v1 h-2z M673,568.8 h1 v1 h-1z M676,568.8 h1 v1 h-1z M678,562.0 h1 v1 h-1z M683,562.0 h1 v1 h-1z M686,568.8 h1 v1 h-1z M690,562.0 h1 v1 h-1z M695,562.0 h2 v1 h-2z M703,568.8 h1 v1 h-1z M707,568.8 h1 v1 h-1z M713,562.0 h1 v1 h-1z M720,562.0 h1 v1 h-1z M724,568.8 h1 v1 h-1z M731,568.8 h2 v1 h-2z M738,568.8 h1 v1 h-1z M741,562.0 h2 v1 h-2z M747,562.0 h1 v1 h-1z M751,562.0 h2 v1 h-2z M754,562.0 h1 v1 h-1z M758,568.8 h2 v1 h-2z M762,568.8 h1 v1 h-1z M768,568.8 h1 v1 h-1z M775,562.0 h1 v1 h-1z M781,568.8 h1 v1 h-1z M787,568.8 h2 v1 h-2z M794,562.0 h2 v1 h-2z M797,562.0 h1 v1 h-1z M805,562.0 h1 v1 h-1z M809,562.0 h1 v1 h-1z M815,568.8 h2 v1 h-2z M817,568.8 h2 v1 h-2z M820,568.8 h1 v1 h-1z M827,568.8 h1 v1 h-1z M831,562.0 h2 v1 h-2z M836,568.8 h1 v1 h-1z M842,562.0 h2 v1 h-2z M847,562.0 h1 v1 h-1z M852,562.0 h2 v1 h-2z M859,562.0 h1 v1 h-1z M862,568.8 h2 v1 h-2z M870,562.0 h1 v1 h-1z M874,562.0 h1 v1 h-1z M878,562.0 h1 v1 h-1z M886,562.0 h1 v1 h-1z M888,562.0 h2 v1 h-2z M896,568.8 h1 v1 h-1z M901,562.0 h1 v1 h-1z M907,562.0 h2 v1 h-2z M915,568.8 h2 v1 h-2z M919,562.0 h2 v1 h-2z M926,568.8 h2 v1 h-2z M929,562.0 h2 v1 h-2z M936,562.0 h1 v1 h-1z M942,568.8 h2 v1 h-2z M945,562.0 h1 v1 h-1z M951,562.0 h2 v1 h-2z M956,562.0 h2 v1 h-2z M963,568.8 h1 v1 h-1z M969,568.8 h1 v1 h-1z M975,568.8 h1 v1 h-1z M979,568.8 h1 v1 h-1z" fill="#ec9a30" opacity="0.60" shape-rendering="crispEdges"/>
<path d="M192,186.0 h1 v1 h-1z M198,181.8 h1 v1 h-1z M201,181.8 h2 v1 h-2z M203,181.8 h2 v1 h-2z M206,181.8 h1 v1 h-1z M212,186.0 h1 v1 h-1z" fill="#93efaa" opacity="0.50" shape-rendering="crispEdges"/>
<path d="M538,181.8 h1 v1 h-1z M541,181.8 h1 v1 h-1z M545,186.0 h1 v1 h-1z M552,186.0 h2 v1 h-2z M557,181.8 h1 v1 h-1z" fill="#93efaa" opacity="0.50" shape-rendering="crispEdges"/>
<path d="M886,181.8 h1 v1 h-1z M888,186.0 h1 v1 h-1z M890,186.0 h1 v1 h-1z M894,181.8 h2 v1 h-2z M897,181.8 h1 v1 h-1z M901,186.0 h2 v1 h-2z M905,186.0 h2 v1 h-2z" fill="#93efaa" opacity="0.50" shape-rendering="crispEdges"/>
<path d="M529,107 h10 l-5,5.5z" fill="#ff8c00"/>
<path d="M529.5,355 l4.5,-4.5 l4.5,4.5 l-4.5,4.5z" fill="#ff8c00"/>
<path d="M987,223.5 l5.5,-4.8 v9.6z" fill="#93efaa"/><path d="M992,223.5 H996.6 V232.5 M993,232.5 h7.4 M994,234.5 h5.4 M995,236.5 h3.2" stroke="#93efaa" stroke-width="1" fill="none" shape-rendering="crispEdges"/>
<path d="M987,283.5 l5.5,-4.8 v9.6z" fill="#f3dc90"/><path d="M992,283.5 H996.6 V292.5 M993,292.5 h7.4 M994,294.5 h5.4 M995,296.5 h3.2" stroke="#f3dc90" stroke-width="1" fill="none" shape-rendering="crispEdges"/>
<path d="M987,569.5 l5.5,-4.8 v9.6z" fill="#f5a02d"/><path d="M992,569.5 H996.6 V578.5 M993,578.5 h7.4 M994,580.5 h5.4 M995,582.5 h3.2" stroke="#f5a02d" stroke-width="1" fill="none" shape-rendering="crispEdges"/>
<path d="M996.5,460 V473" stroke="#12a877" stroke-width="1" shape-rendering="crispEdges"/><path d="M992,473 h9.4 l-4.7,5.2z" fill="#12a877"/>
</svg>
<div class="t" id="t25" style="left:1000.80px;top:220.00px;font-size:12px;color:#93efaa;font-family:'Liberation Sans', sans-serif;font-weight:bold;transform:scaleX(0.9839);transform-origin:0 0;"><span>f2</span></div>
<div class="t" id="t26" style="left:1000.80px;top:280.00px;font-size:12px;color:#f3dc90;font-family:'Liberation Sans', sans-serif;font-weight:bold;transform:scaleX(0.8902);transform-origin:0 0;"><span>f1</span></div>
<div class="t" id="t27" style="left:998.00px;top:461.00px;font-size:12px;color:#12a877;font-family:'Liberation Sans', sans-serif;font-weight:bold;transform:scaleX(0.8879);transform-origin:0 0;"><span>m2</span></div>
<div class="t" id="t28" style="left:998.00px;top:566.00px;font-size:12px;color:#f5a02d;font-family:'Liberation Sans', sans-serif;font-weight:bold;transform:scaleX(0.7611);transform-origin:0 0;"><span>m1</span></div>
<div class="b " style="left:9px;top:27px;width:52px;height:52px;background:#000;border-top:3px solid #fff;border-left:3px solid #fff;border-bottom:3px solid #a0a0a0;border-right:3px solid #a0a0a0;box-shadow:0 0 0 1px #e3e3e3;"></div>
<svg style="left:0;top:0" width="80" height="90"><circle cx="40.70" cy="53.00" r="1.45" fill="#1f9fd4"/><rect x="44.15" y="51.95" width="2.10" height="2.10" fill="#1f9fd4"/><rect x="47.50" y="52.20" width="1.60" height="1.60" fill="#1f9fd4"/><rect x="50.00" y="52.40" width="1.20" height="1.20" fill="#1f9fd4"/><rect x="51.95" y="52.55" width="0.90" height="0.90" fill="#1f9fd4"/><circle cx="39.03" cy="57.03" r="1.90" fill="#1f9fd4"/><rect x="40.90" y="58.90" width="2.20" height="2.20" fill="#1f9fd4"/><rect x="43.63" y="61.63" width="1.40" height="1.40" fill="#1f9fd4"/><rect x="46.24" y="64.24" width="1.00" height="1.00" fill="#1f9fd4"/><circle cx="35.00" cy="58.70" r="1.45" fill="#1f9fd4"/><rect x="33.95" y="62.15" width="2.10" height="2.10" fill="#1f9fd4"/><rect x="34.20" y="65.50" width="1.60" height="1.60" fill="#1f9fd4"/><rect x="34.40" y="68.00" width="1.20" height="1.20" fill="#1f9fd4"/><rect x="34.55" y="69.95" width="0.90" height="0.90" fill="#1f9fd4"/><circle cx="30.97" cy="57.03" r="1.90" fill="#1f9fd4"/><rect x="26.90" y="58.90" width="2.20" height="2.20" fill="#1f9fd4"/><rect x="24.97" y="61.63" width="1.40" height="1.40" fill="#1f9fd4"/><rect x="22.76" y="64.24" width="1.00" height="1.00" fill="#1f9fd4"/><circle cx="29.30" cy="53.00" r="1.45" fill="#1f9fd4"/><rect x="23.75" y="51.95" width="2.10" height="2.10" fill="#1f9fd4"/><rect x="20.90" y="52.20" width="1.60" height="1.60" fill="#1f9fd4"/><rect x="18.80" y="52.40" width="1.20" height="1.20" fill="#1f9fd4"/><rect x="17.15" y="52.55" width="0.90" height="0.90" fill="#1f9fd4"/><circle cx="30.97" cy="48.97" r="1.90" fill="#1f9fd4"/><rect x="26.90" y="44.90" width="2.20" height="2.20" fill="#1f9fd4"/><rect x="24.97" y="42.97" width="1.40" height="1.40" fill="#1f9fd4"/><rect x="22.76" y="40.76" width="1.00" height="1.00" fill="#1f9fd4"/><circle cx="35.00" cy="47.30" r="1.45" fill="#1f9fd4"/><rect x="33.95" y="41.75" width="2.10" height="2.10" fill="#1f9fd4"/><rect x="34.20" y="38.90" width="1.60" height="1.60" fill="#1f9fd4"/><rect x="34.40" y="36.80" width="1.20" height="1.20" fill="#1f9fd4"/><rect x="34.55" y="35.15" width="0.90" height="0.90" fill="#1f9fd4"/><circle cx="39.03" cy="48.97" r="1.90" fill="#1f9fd4"/><rect x="40.90" y="44.90" width="2.20" height="2.20" fill="#1f9fd4"/><rect x="43.63" y="42.97" width="1.40" height="1.40" fill="#1f9fd4"/><rect x="46.24" y="40.76" width="1.00" height="1.00" fill="#1f9fd4"/></svg>
<div class="b " style="left:5px;top:97px;width:62px;height:62px;background:#000;border-top:3px solid #fff;border-left:3px solid #fff;border-bottom:3px solid #a0a0a0;border-right:3px solid #a0a0a0;box-shadow:0 0 0 1px #e3e3e3;"></div>
<div class="b " style="left:5px;top:160px;width:62px;height:62px;background:#000;border-top:3px solid #fff;border-left:3px solid #fff;border-bottom:3px solid #a0a0a0;border-right:3px solid #a0a0a0;box-shadow:0 0 0 1px #e3e3e3;"></div>
<div class="b " style="left:5px;top:223px;width:62px;height:62px;background:#000;border-top:3px solid #fff;border-left:3px solid #fff;border-bottom:3px solid #a0a0a0;border-right:3px solid #a0a0a0;box-shadow:0 0 0 1px #e3e3e3;"></div>
<div class="b " style="left:5px;top:286px;width:62px;height:62px;background:#000;border-top:3px solid #fff;border-left:3px solid #fff;border-bottom:3px solid #a0a0a0;border-right:3px solid #a0a0a0;box-shadow:0 0 0 1px #e3e3e3;"></div>
<div class="b " style="left:5px;top:349px;width:62px;height:62px;background:#000;border-top:3px solid #fff;border-left:3px solid #fff;border-bottom:3px solid #a0a0a0;border-right:3px solid #a0a0a0;box-shadow:0 0 0 1px #e3e3e3;"></div>
<div class="b " style="left:5px;top:412px;width:62px;height:62px;background:#000;border-top:3px solid #fff;border-left:3px solid #fff;border-bottom:3px solid #a0a0a0;border-right:3px solid #a0a0a0;box-shadow:0 0 0 1px #e3e3e3;"></div>
<div class="b " style="left:5px;top:475px;width:62px;height:62px;background:#000;border-top:3px solid #fff;border-left:3px solid #fff;border-bottom:3px solid #a0a0a0;border-right:3px solid #a0a0a0;box-shadow:0 0 0 1px #e3e3e3;"></div>
<div class="b " style="left:5px;top:538px;width:62px;height:62px;background:#000;border-top:3px solid #fff;border-left:3px solid #fff;border-bottom:3px solid #a0a0a0;border-right:3px solid #a0a0a0;box-shadow:0 0 0 1px #e3e3e3;"></div>
<svg style="left:0;top:0" width="80" height="620"><path d="M12,141 H22.5 L49.7,105.3 H60" stroke="#fff" stroke-width="2" fill="none" stroke-linejoin="miter"/><path d="M41,109 H53 M19,137 H31" stroke="#ff8c00" stroke-width="2" fill="none"/><path d="M28.0,147.0 H44.0" stroke="#ff8c00" stroke-width="2"/><path d="M25.0,147.0 l6,-5 v10z M47.0,147.0 l-6,-5 v10z" fill="#ff8c00"/><path d="M12,168.3 H22.5 L49.7,204 H60" stroke="#fff" stroke-width="2" fill="none" stroke-linejoin="miter"/><path d="M19,172 H31 M41,200 H53" stroke="#ff8c00" stroke-width="2" fill="none"/><path d="M28.0,210.0 H44.0" stroke="#ff8c00" stroke-width="2"/><path d="M25.0,210.0 l6,-5 v10z M47.0,210.0 l-6,-5 v10z" fill="#ff8c00"/><path d="M12,265.4 H25 V231.6 H42.2 V265.4 H53 V231.6 H60" stroke="#fff" stroke-width="2" fill="none" stroke-linejoin="miter"/><path d="M19,246.8 H31 M47,246.8 H59" stroke="#ff8c00" stroke-width="2" fill="none"/><path d="M28.0,273.0 H50.0" stroke="#ff8c00" stroke-width="2"/><path d="M25.0,273.0 l6,-5 v10z M53.0,273.0 l-6,-5 v10z" fill="#ff8c00"/><path d="M12,328.4 H25 V294.6 H42.2 V328.4 H53 V294.6 H60" stroke="#fff" stroke-width="2" fill="none" stroke-linejoin="miter"/><path d="M19,309.8 H31 M47,309.8 H59" stroke="#ff8c00" stroke-width="2" fill="none"/><path d="M28.0,336.3 H50.0" stroke="#ff8c00" stroke-width="2"/><path d="M25.0,336.3 l6,-5 v10z M53.0,336.3 l-6,-5 v10z" fill="#ff8c00"/><path d="M24,388.2 H28 L33,392.5 L36.6,391.0 V361.5 Q37,358.6 40,358.6 Q42,358.6 46,363.3 H56 V388.2 H60" stroke="#fff" stroke-width="2" fill="none" stroke-linejoin="miter"/><path d="M35,357 H47 M27,394 H39" stroke="#ff8c00" stroke-width="2" fill="none"/><path d="M17,361 V390" stroke="#ff8c00" stroke-width="2" fill="none"/><path d="M17.0,356.5 l5,6 h-10z" fill="#ff8c00"/><path d="M17.0,394.5 l5,-6 h-10z" fill="#ff8c00"/><path d="M24,451.2 H28 L33,455.5 L36.6,454.0 V424.5 Q37,421.6 40,421.6 Q42,421.6 46,426.3 H56 V451.2 H60" stroke="#fff" stroke-width="2" fill="none" stroke-linejoin="miter"/><path d="M27,457 H39" stroke="#ff8c00" stroke-width="2" fill="none"/><path d="M17.0,456.5 l5,6 h-10z" fill="#ff8c00"/><path d="M12,463 H22 M17,462 V466.5 M12,466.5 H22" stroke="#ff8c00" stroke-width="1.6" fill="none"/><path d="M24,514.2 H28 L33,518.5 L36.6,517.0 V487.5 Q37,484.6 40,484.6 Q42,484.6 46,489.3 H56 V514.2 H60" stroke="#fff" stroke-width="2" fill="none" stroke-linejoin="miter"/><path d="M35,483 H47" stroke="#ff8c00" stroke-width="2" fill="none"/><path d="M17,487 V529 M12,529 H22" stroke="#ff8c00" stroke-width="2" fill="none"/><path d="M17.0,482.5 l5,6 h-10z" fill="#ff8c00"/><path d="M24,577.2 H28 L33,581.5 L36.6,580.0 V550.5 Q37,547.6 40,547.6 Q42,547.6 46,552.3 H56 V577.2 H60" stroke="#fff" stroke-width="2" fill="none" stroke-linejoin="miter"/><path d="M24,564 H58" stroke="#ff8c00" stroke-width="2" stroke-dasharray="3 1.7"/><path d="M17,568 V592 M12,592 H22" stroke="#ff8c00" stroke-width="2" fill="none"/><path d="M17.0,563.5 l5,6 h-10z" fill="#ff8c00"/></svg>
<div class="t" id="t29" style="left:11.40px;top:329.00px;font-size:14.5px;color:#ff8c00;font-family:'Liberation Serif', serif;font-weight:bold;letter-spacing:0.519px;"><span>1/</span></div>
<div class="b " style="left:5px;top:607px;width:62px;height:61px;background:#f0f0f0;border-top:2px solid #fff;border-left:2px solid #fff;border-bottom:2px solid #a0a0a0;border-right:2px solid #a0a0a0;box-shadow:0 0 0 1px #e3e3e3;"></div>
<div class="b " style="left:5px;top:670px;width:62px;height:61px;background:#f0f0f0;border-top:2px solid #fff;border-left:2px solid #fff;border-bottom:2px solid #a0a0a0;border-right:2px solid #a0a0a0;box-shadow:0 0 0 1px #e3e3e3;"></div>
<div class="t" id="t30" style="left:15.20px;top:621.00px;font-size:13px;color:#000;font-family:'Liberation Sans', sans-serif;transform:scaleX(1.2996);transform-origin:0 0;-webkit-text-stroke:0.3px #000;"><span>More</span></div>
<div class="t" id="t31" style="left:10.30px;top:641.00px;font-size:13px;color:#000;font-family:'Liberation Sans', sans-serif;transform:scaleX(1.1727);transform-origin:0 0;-webkit-text-stroke:0.3px #000;"><span>(1 of 2)</span></div>
<div class="t" id="t32" style="left:10.30px;top:685.00px;font-size:13px;color:#000;font-family:'Liberation Sans', sans-serif;transform:scaleX(1.3093);transform-origin:0 0;-webkit-text-stroke:0.3px #000;"><span>Delete</span></div>
<div class="t" id="t33" style="left:24.60px;top:702.00px;font-size:13px;color:#000;font-family:'Liberation Sans', sans-serif;transform:scaleX(1.3008);transform-origin:0 0;-webkit-text-stroke:0.3px #000;"><span>All</span></div>
<div class="b " style="left:80px;top:615px;width:15px;height:18px;background:#f6f6f6;border-top:1px solid #a0a0a0;border-left:1px solid #a0a0a0;border-bottom:1px solid #fff;border-right:1px solid #fff;"></div>
<div class="b " style="left:976px;top:614px;width:15px;height:18px;background:#f6f6f6;border-top:1px solid #a0a0a0;border-left:1px solid #a0a0a0;border-bottom:1px solid #fff;border-right:1px solid #fff;"></div>
<div class="b " style="left:102px;top:614px;width:26px;height:13px;border:1px solid #8e8e8e;border-radius:3px;background:linear-gradient(#f7f7f7 0%,#efefef 48%,#dedede 52%,#d4d4d4 100%);box-shadow:inset 0 0 0 1px #fbfbfb;"></div>
<div class="b " style="left:102px;top:629px;width:26px;height:13px;border:1px solid #8e8e8e;border-radius:3px;background:linear-gradient(#f7f7f7 0%,#efefef 48%,#dedede 52%,#d4d4d4 100%);box-shadow:inset 0 0 0 1px #fbfbfb;"></div>
<div class="b " style="left:130px;top:614px;width:19px;height:28px;border:1px solid #8e8e8e;border-radius:3px;background:linear-gradient(#f7f7f7 0%,#efefef 48%,#dedede 52%,#d4d4d4 100%);box-shadow:inset 0 0 0 1px #fbfbfb;"></div>
<div class="b " style="left:166px;top:614px;width:30px;height:28px;border:1px solid #3c7fb1;border-radius:3px;background:linear-gradient(#d6ecf7 0%,#a9d4ea 50%,#7fbfe0 100%);box-shadow:inset 0 0 0 1px #e8f5fc;"></div>
<svg style="left:0;top:0" width="1024" height="700"><path d="M170,628 l4,-9 h10 v18 h-10z" fill="#0aa0a0" stroke="#033" stroke-width="1"/></svg>
<div class="b " style="left:825px;top:614px;width:25px;height:27px;background:#f0f0f0;border:1px solid #8c8c8c;border-radius:3px;box-shadow:inset 0 0 0 1px #fff;"></div>
<div class="b " style="left:828px;top:617px;width:19px;height:21px;background:#000;"></div>
<div class="t" id="t34" style="left:637.40px;width:400px;text-align:center;top:617.00px;font-size:20px;color:#ffff00;font-family:'Liberation Sans', sans-serif;-webkit-text-stroke:0.45px #ffff00;"><span>T</span></div>
<div class="b " style="left:851px;top:612px;width:89px;height:32px;background:#fafafa;border:1px solid #c8c8c8;"></div>
<div class="b " style="left:853px;top:614px;width:85px;height:28px;background:#000;"></div>
<div class="t" id="t35" style="left:858.00px;top:618.00px;font-size:16.5px;color:#ffff00;font-family:'Liberation Sans', sans-serif;letter-spacing:0.117px;"><span>0.0 V</span></div>
<div class="b " style="left:941px;top:613px;width:26px;height:14px;border:1px solid #8e8e8e;border-radius:3px;background:linear-gradient(#f7f7f7 0%,#efefef 48%,#dedede 52%,#d4d4d4 100%);box-shadow:inset 0 0 0 1px #fbfbfb;"></div>
<div class="b " style="left:941px;top:629px;width:26px;height:14px;border:1px solid #8e8e8e;border-radius:3px;background:linear-gradient(#f7f7f7 0%,#efefef 48%,#dedede 52%,#d4d4d4 100%);box-shadow:inset 0 0 0 1px #fbfbfb;"></div>
<svg style="left:0;top:0" width="1024" height="700"><path d="M87.5,629.0 V619.0 M84.5,622.5 l3,-3.5 l3,3.5" stroke="#000" stroke-width="1" fill="none"/><path d="M983.5,628.5 V618.0 M980.5,621.5 l3,-3.5 l3,3.5" stroke="#000" stroke-width="1" fill="none"/></svg>
<svg style="left:0;top:0" width="1024" height="700"><path d="M112.0,619.5 l3.0,-3.2 l3.0,3.2" stroke="#444" stroke-width="1" fill="none"/><path d="M112.0,623.0 l3.0,-3.2 l3.0,3.2" stroke="#444" stroke-width="1" fill="none"/><path d="M112.0,631.5 l3.0,3.2 l3.0,-3.2" stroke="#444" stroke-width="1" fill="none"/><path d="M112.0,635.0 l3.0,3.2 l3.0,-3.2" stroke="#444" stroke-width="1" fill="none"/><path d="M136.5,620.5 l3.0,-3.2 l3.0,3.2" stroke="#444" stroke-width="1" fill="none"/><path d="M136.5,624.0 l3.0,-3.2 l3.0,3.2" stroke="#444" stroke-width="1" fill="none"/><path d="M136.5,632.0 l3.0,3.2 l3.0,-3.2" stroke="#777" stroke-width="1" fill="none"/><path d="M136.5,635.5 l3.0,3.2 l3.0,-3.2" stroke="#777" stroke-width="1" fill="none"/><path d="M948.5,623 l6,-5.5 l6,5.5z" fill="#000"/><path d="M948.5,633 l6,5.5 l6,-5.5z" fill="#000"/></svg>
<div class="b " style="left:82px;top:649px;width:55px;height:24px;background:#303030;"></div>
<div class="b " style="left:137px;top:649px;width:2px;height:24px;background:#fff;"></div>
<div class="b " style="left:139px;top:650px;width:52px;height:23px;background:#f0f0f0;border-right:1px solid #a0a0a0;"></div>
<div class="b " style="left:192px;top:650px;width:1px;height:23px;background:#fff;"></div>
<div class="t" id="t36" style="left:88.00px;top:654.00px;font-size:16px;color:#fff;font-family:'Liberation Sans', sans-serif;letter-spacing:-0.472px;"><span>Status</span></div>
<div class="t" id="t37" style="left:143.00px;top:654.00px;font-size:16px;color:#000;font-family:'Liberation Sans', sans-serif;letter-spacing:-1.206px;"><span>Scales</span></div>
<div class="t" id="t38" style="left:82.30px;top:678.00px;font-size:15px;color:#fa8a12;font-family:'Liberation Mono', monospace;letter-spacing:-0.257px;"><span>Acquisition:</span></div>
<div class="t" id="t39" style="left:81.50px;top:696.00px;font-size:15px;color:#f2f2f2;font-family:'Liberation Mono', monospace;letter-spacing:-0.041px;"><span>Sampling Mode</span></div>
<div class="t" id="t40" style="left:216.80px;top:696.00px;font-size:15px;color:#f2f2f2;font-family:'Liberation Mono', monospace;letter-spacing:-0.099px;"><span>Real Time</span></div>
<div class="t" id="t41" style="left:81.50px;top:714.00px;font-size:15px;color:#f2f2f2;font-family:'Liberation Mono', monospace;letter-spacing:-0.052px;"><span>Capture Time</span></div>
<div class="t" id="t42" style="left:216.80px;top:714.00px;font-size:15px;color:#f2f2f2;font-family:'Liberation Mono', monospace;letter-spacing:-0.159px;"><span>1.00 µs</span></div>
<div class="t" id="t43" style="left:81.50px;top:732.00px;font-size:15px;color:#f2f2f2;font-family:'Liberation Mono', monospace;letter-spacing:-0.041px;"><span>Effective Res</span></div>
<div class="t" id="t44" style="left:216.80px;top:732.00px;font-size:15px;color:#f2f2f2;font-family:'Liberation Mono', monospace;letter-spacing:-0.080px;"><span>25.0 ps/pt</span></div>
<div class="t" id="t45" style="left:81.50px;top:750.00px;font-size:15px;color:#f2f2f2;font-family:'Liberation Mono', monospace;letter-spacing:-0.065px;"><span>Bits Of Res</span></div>
<div class="t" id="t46" style="left:216.80px;top:750.00px;font-size:15px;color:#f2f2f2;font-family:'Liberation Mono', monospace;letter-spacing:-0.207px;"><span>8 bits</span></div>
<div class="t" id="t47" style="left:648.50px;top:678.00px;font-size:15px;color:#fa8a12;font-family:'Liberation Mono', monospace;letter-spacing:-0.197px;"><span>Trigger:</span></div>
<div class="t" id="t48" style="left:648.50px;top:696.00px;font-size:15px;color:#f2f2f2;font-family:'Liberation Mono', monospace;letter-spacing:-0.399px;"><span>Mode</span></div>
<div class="t" id="t49" style="left:765.00px;top:696.00px;font-size:15px;color:#f2f2f2;font-family:'Liberation Mono', monospace;letter-spacing:-0.507px;"><span>Edge (</span></div>
<div class="t" id="t50" style="left:829.50px;top:696.00px;font-size:15px;color:#f2f2f2;font-family:'Liberation Mono', monospace;"><span>)</span></div>
<svg style="left:0;top:0" width="1024" height="768"><path d="M824,707.5 V699" stroke="#f2f2f2" stroke-width="1.6" fill="none"/><path d="M820.2,700.8 L824,695.8 L827.8,700.8z" fill="#f2f2f2"/></svg>
<div class="t" id="t51" style="left:648.50px;top:732.00px;font-size:15px;color:#f2f2f2;font-family:'Liberation Mono', monospace;letter-spacing:-0.065px;"><span>InfiniiScan</span></div>
<div class="t" id="t52" style="left:765.00px;top:732.00px;font-size:15px;color:#f2f2f2;font-family:'Liberation Mono', monospace;letter-spacing:-0.638px;"><span>Off</span></div>
<div class="b " style="left:0px;top:764px;width:73px;height:1px;background:#6a6a6a;"></div>
<div class="b " style="left:0px;top:765px;width:1024px;height:1px;background:#eef1f4;"></div>
<div class="b " style="left:0px;top:766px;width:1024px;height:2px;background:#bccbdc;"></div>
<div class="b " style="left:60px;top:765px;width:58px;height:3px;background:#fff;border-left:1px solid #8a96a2;border-right:1px solid #8a96a2;"></div>
<div class="b " style="left:122px;top:765px;width:54px;height:3px;background:#fff;border-left:1px solid #8a96a2;border-right:1px solid #8a96a2;"></div>
<div class="b " style="left:1009px;top:766px;width:1px;height:2px;background:#6a7684;"></div>
<div class="b " style="left:176px;top:364px;width:646px;height:297px;border-radius:7px 7px 6px 6px;box-shadow:0 1px 7px 1px rgba(0,0,0,.45);background:linear-gradient(to bottom,#b4b4b4 0px,#9a9a9a 30px,#8c8c8c 236px,#a8b8be 250px,#cfdde2 100%);"></div>
<div class="b " style="left:177px;top:365px;width:644px;height:295px;border-radius:6px 6px 5px 5px;background:linear-gradient(to bottom,#4a4a4a 0px,#383838 26px,#2c2c2c 60px,#262626 235px,#8fb0b8 243px,#e4f6fa 255px,#f4fdff 100%);"></div>
<div class="b " style="left:177px;top:365px;width:644px;height:27px;border-radius:6px 6px 0 0;background:linear-gradient(to bottom,#3e3e3e 0,#262626 30%,#1b1b1b 100%);"></div>
<div class="b " style="left:190px;top:371px;width:146px;height:15px;border-radius:8px;filter:blur(6px);background:linear-gradient(to right,rgba(120,120,120,.9) 0,rgba(170,170,170,1) 25%,rgba(170,170,170,1) 75%,rgba(120,120,120,.7) 100%);"></div>
<div class="b " style="left:177px;top:463px;width:5px;height:16px;background:#1f9a78;filter:blur(2.5px);opacity:.75;"></div>
<div class="b " style="left:177px;top:559px;width:5px;height:15px;background:#e0932f;filter:blur(2.5px);opacity:.75;"></div>
<div class="b " style="left:177px;top:615px;width:5px;height:26px;background:#35b4c6;filter:blur(2px);opacity:.55;"></div>
<svg style="left:182px;top:369px" width="18" height="18"><rect x="5.40" y="5.70" width="2.20" height="2.20" fill="#1a1aff"/><rect x="2.95" y="3.25" width="2.10" height="2.10" fill="#1a1aff"/><rect x="0.85" y="1.15" width="1.50" height="1.50" fill="#1a1aff"/><rect x="5.40" y="10.10" width="2.20" height="2.20" fill="#1a1aff"/><rect x="2.95" y="12.65" width="2.10" height="2.10" fill="#1a1aff"/><rect x="0.85" y="15.35" width="1.50" height="1.50" fill="#1a1aff"/><rect x="4.10" y="8.00" width="2.00" height="2.00" fill="#1a1aff"/><rect x="1.25" y="8.15" width="1.70" height="1.70" fill="#1a1aff"/><rect x="7.70" y="4.20" width="2.00" height="2.00" fill="#1a1aff"/><rect x="7.85" y="1.35" width="1.70" height="1.70" fill="#1a1aff"/><rect x="9.80" y="5.70" width="2.20" height="2.20" fill="#1a1aff"/><rect x="12.35" y="3.25" width="2.10" height="2.10" fill="#1a1aff"/><rect x="15.05" y="1.15" width="1.50" height="1.50" fill="#1a1aff"/><rect x="9.80" y="10.10" width="2.20" height="2.20" fill="#1a1aff"/><rect x="12.35" y="12.65" width="2.10" height="2.10" fill="#1a1aff"/><rect x="15.05" y="15.35" width="1.50" height="1.50" fill="#1a1aff"/><rect x="11.30" y="8.00" width="2.00" height="2.00" fill="#1a1aff"/><rect x="14.45" y="8.15" width="1.70" height="1.70" fill="#1a1aff"/><rect x="7.70" y="11.80" width="2.00" height="2.00" fill="#1a1aff"/><rect x="7.85" y="14.95" width="1.70" height="1.70" fill="#1a1aff"/></svg>
<div class="t" id="t53" style="left:204.40px;top:372.00px;font-size:12px;color:#000;font-family:'Liberation Sans', sans-serif;letter-spacing:-0.027px;"><span>Running Test 14 of 45</span></div>
<div class="b " style="left:713px;top:364px;width:104px;height:20px;border:1px solid #9c9c9c;border-top:none;border-radius:0 0 5px 5px;background:linear-gradient(#5a5a5a 0,#3a3a3a 45%,#202020 50%,#2c2c2c 100%);box-shadow:inset 0 0 0 1px rgba(255,255,255,.12);"></div>
<div class="b " style="left:741px;top:364px;width:1px;height:19px;background:#9c9c9c;"></div>
<div class="b " style="left:768px;top:364px;width:1px;height:19px;background:#9c9c9c;"></div>
<svg style="left:0;top:0" width="1024" height="400"><rect x="722.7" y="373.8" width="10.6" height="3.2" fill="#fff"/><rect x="751" y="370" width="8.6" height="6.4" fill="none" stroke="#fff" stroke-width="2"/><path d="M788.5,369.5 L796.5,377 M796.5,369.5 L788.5,377" stroke="#fff" stroke-width="2.6"/></svg>
<div class="b " style="left:182px;top:391px;width:635px;height:264px;background:#f0f0f0;border:1px solid #2a2a2a;border-bottom-color:#8d9da3;border-image:linear-gradient(to bottom,#2a2a2a 0,#2a2a2a 215px,#8d9da3 226px,#9aaab0 100%) 1;box-shadow:inset 0 0 0 1px #fff;"></div>
<div class="t" id="t54" style="left:267.00px;top:394.00px;font-size:12px;color:#000;font-family:'Liberation Sans', sans-serif;letter-spacing:-0.435px;"><span>Current Test: 1.4.9 HS Clock TX Common-Level Variations Between 50-450MHz (VCMTX(LF))</span></div>
<div class="b " style="left:184px;top:409px;width:630px;height:1px;background:#696969;"></div>
<div class="b " style="left:184px;top:410px;width:79px;height:173px;background:#f0f0f0;border-top:1px solid #a0a0a0;border-left:1px solid #e8e8e8;"></div>
<div class="b " style="left:263px;top:409px;width:2px;height:174px;background:linear-gradient(to right,#a0a0a0 0,#a0a0a0 50%,#555 50%);"></div>
<div class="b " style="left:265px;top:410px;width:549px;height:1px;background:#a0a0a0;"></div>
<div class="b " style="left:184px;top:583px;width:630px;height:1px;background:#fff;"></div>
<div class="b " style="left:184px;top:588px;width:630px;height:1px;background:#a0a0a0;"></div>
<div class="b " style="left:184px;top:589px;width:630px;height:1px;background:#fff;"></div>
<div class="t" id="t55" style="left:188.75px;top:412.00px;font-size:12px;color:#000;font-family:'Liberation Sans', sans-serif;letter-spacing:-0.462px;"><span>13 of 45 Tests</span></div>
<div class="t" id="t56" style="left:196.00px;top:425.00px;font-size:12px;color:#000;font-family:'Liberation Sans', sans-serif;letter-spacing:-0.660px;"><span>Completed</span></div>
<div class="b " style="left:185px;top:441px;width:76px;height:32px;background:#ff0000;"></div>
<div class="t" id="t57" style="left:201.00px;top:442.00px;font-size:12px;color:#000;font-family:'Liberation Sans', sans-serif;font-weight:bold;letter-spacing:-0.013px;"><span>2 Failed</span></div>
<div class="t" id="t58" style="left:267.40px;top:537.00px;font-size:12px;color:#000;font-family:'Liberation Sans', sans-serif;letter-spacing:-0.710px;"><span>Status:</span></div>
<div class="b " style="left:321px;top:536px;width:60px;height:15px;background:#c3c3c3;border-top:1px solid #a2a2a2;border-left:1px solid #a2a2a2;"></div>
<div class="t" id="t59" style="left:324.00px;top:537.00px;font-size:12px;color:#000;font-family:'Liberation Sans', sans-serif;"><span>Performing</span></div>
<div class="t" id="t60" style="left:267.40px;top:563.00px;font-size:12px;color:#000;font-family:'Liberation Sans', sans-serif;letter-spacing:-0.520px;"><span>Progress:</span></div>
<div class="b " style="left:321px;top:565px;width:60px;height:7px;background:#fff;border-top:1px solid #a0a0a0;border-left:1px solid #a0a0a0;background:repeating-linear-gradient(to right,#2b8cf0 0,#2b8cf0 2px,#fff 2px,#fff 4px);background-position:1px 0;"></div>
<div class="b " style="left:191px;top:600px;width:75px;height:23px;background:#f0f0f0;border:1px solid #000;box-shadow:inset 1px 1px 0 #fff,inset -1px -1px 0 #696969,inset -2px -2px 0 #a0a0a0;"></div>
<div class="t" id="t61" style="left:218.00px;top:605.00px;font-size:12px;color:#000;font-family:'Liberation Sans', sans-serif;letter-spacing:-0.896px;"><span>Stop</span></div>
<div class="b " style="left:184px;top:634px;width:630px;height:1px;background:#a0a0a0;"></div>
<div class="b " style="left:184px;top:635px;width:630px;height:1px;background:#fff;"></div>
<div class="t" id="t62" style="left:185.00px;top:638.00px;font-size:12px;color:#000;font-family:'Liberation Sans', sans-serif;letter-spacing:-0.694px;"><span>Run-Until: once</span></div>
<div class="b " style="left:360px;top:444px;width:558px;height:150px;border-radius:7px;box-shadow:0 3px 10px 2px rgba(0,0,0,.72);"></div>
<div class="b " style="left:360px;top:444px;width:558px;height:150px;border-radius:7px;overflow:hidden;border:1px solid #343434;"><div class="b" style="left:0;top:0;width:470px;height:150px;background:linear-gradient(to right,#cadcf1 0px,#bdd4ed 120px,#b9d1ec 300px,#cfe1f4 430px,#bcd0e6 452px,#8fa0b3 462px);"></div><div class="b" style="left:0;top:0;width:454px;height:30px;background:linear-gradient(to bottom,rgba(255,255,255,.35),rgba(255,255,255,0));"></div><div class="b" style="left:1px;top:62px;width:8px;height:88px;background:linear-gradient(#b0cae8,#a8c5e5);"></div><div class="b" style="left:1px;top:142px;width:454px;height:7px;background:linear-gradient(to right,#a8c5e5,#b4cde9 60%,#a9c3df);"></div><div class="b" style="left:461px;top:0;width:97px;height:150px;background:linear-gradient(to bottom,#6e6e6e 0,#565656 18px,#474747 31px,#2c2c2c 60px,#222 135px,#2a2a2a 150px);"></div><div class="b" style="left:453px;top:0;width:16px;height:150px;background:linear-gradient(to right,rgba(150,165,185,0),#6a7078 45%,#555 60%,rgba(80,80,80,0));"></div><div class="b" style="left:466px;top:22px;width:56px;height:4px;background:#2f8f7a;filter:blur(2.2px);opacity:.6;"></div><div class="b" style="left:510px;top:5px;width:38px;height:4px;background:#5f8a84;filter:blur(2.2px);opacity:.5;"></div><div class="b" style="left:549px;top:31px;width:8px;height:27px;background:linear-gradient(to bottom,#858585,#cfcfcf);"></div><div class="b" style="left:549px;top:58px;width:8px;height:84px;background:linear-gradient(to bottom,#2a2a2a,#1d1d1d 70%,#444);"></div></div>
<div class="b " style="left:361px;top:445px;width:556px;height:148px;border-radius:6px;border:1px solid rgba(255,255,255,.5);"></div>
<div class="b " style="left:366px;top:450px;width:140px;height:20px;border-radius:10px;filter:blur(5px);background:rgba(255,255,255,.6);"></div>
<div class="t" id="t63" style="left:370.75px;top:454.00px;font-size:12px;color:#000;font-family:'Liberation Sans', sans-serif;letter-spacing:-0.175px;"><span>MIPI D-PHY Test Error</span></div>
<div class="b " style="left:369px;top:475px;width:542px;height:111px;background:#f0f0f0;border:1px solid #6b7785;border-right-color:#3a3a3a;box-shadow:inset 0 0 0 1px rgba(255,255,255,.7);"></div>
<svg style="left:380px;top:487px" width="34" height="34"><defs><radialGradient id="rg" cx="50%" cy="35%" r="65%"><stop offset="0" stop-color="#e8514a"/><stop offset=".55" stop-color="#c2191a"/><stop offset="1" stop-color="#8f0e10"/></radialGradient><linearGradient id="rgl" x1="0" y1="0" x2="0" y2="1"><stop offset="0" stop-color="#fff" stop-opacity=".45"/><stop offset="1" stop-color="#fff" stop-opacity="0"/></linearGradient></defs><circle cx="17" cy="17" r="16" fill="#d8d8d8" stroke="#8a8a8a" stroke-width="1"/><circle cx="17" cy="17" r="14.2" fill="url(#rg)" stroke="#7d0c0e" stroke-width=".8"/><path d="M3.6,15 A13.6,13.6 0 0 1 30.4,15 Q17,19 3.6,15z" fill="url(#rgl)"/><path d="M11.6,11.6 L22.4,22.4 M22.4,11.6 L11.6,22.4" stroke="#a9a9a9" stroke-width="4.6" stroke-linecap="square"/><path d="M11.6,11.6 L22.4,22.4 M22.4,11.6 L11.6,22.4" stroke="#ececec" stroke-width="3.4" stroke-linecap="square"/></svg>
<div class="t" id="t64" style="left:425.00px;top:491.00px;font-size:12px;color:#000;font-family:'Liberation Sans', sans-serif;letter-spacing:0.116px;"><span>[HS-Common Level Variations] Unable to handle the following error:</span></div>
<div class="t" id="t65" style="left:425.00px;top:506.00px;font-size:12px;color:#000;font-family:'Liberation Sans', sans-serif;letter-spacing:0.065px;"><span>Index was out of range. Must be non-negative and less than the size of the collection.</span></div>
<div class="t" id="t66" style="left:425.00px;top:521.00px;font-size:12px;color:#000;font-family:'Liberation Sans', sans-serif;letter-spacing:0.213px;"><span>Parameter name: index</span></div>
<div class="b " style="left:602px;top:553px;width:75px;height:23px;background:#f0f0f0;border:1px solid #000;box-shadow:inset 1px 1px 0 #fff,inset -1px -1px 0 #696969,inset -2px -2px 0 #a0a0a0;"></div>
<div class="t" id="t67" style="left:632.00px;top:558.00px;font-size:12px;color:#000;font-family:'Liberation Sans', sans-serif;letter-spacing:-0.344px;"><span>OK</span></div>
</body></html>
